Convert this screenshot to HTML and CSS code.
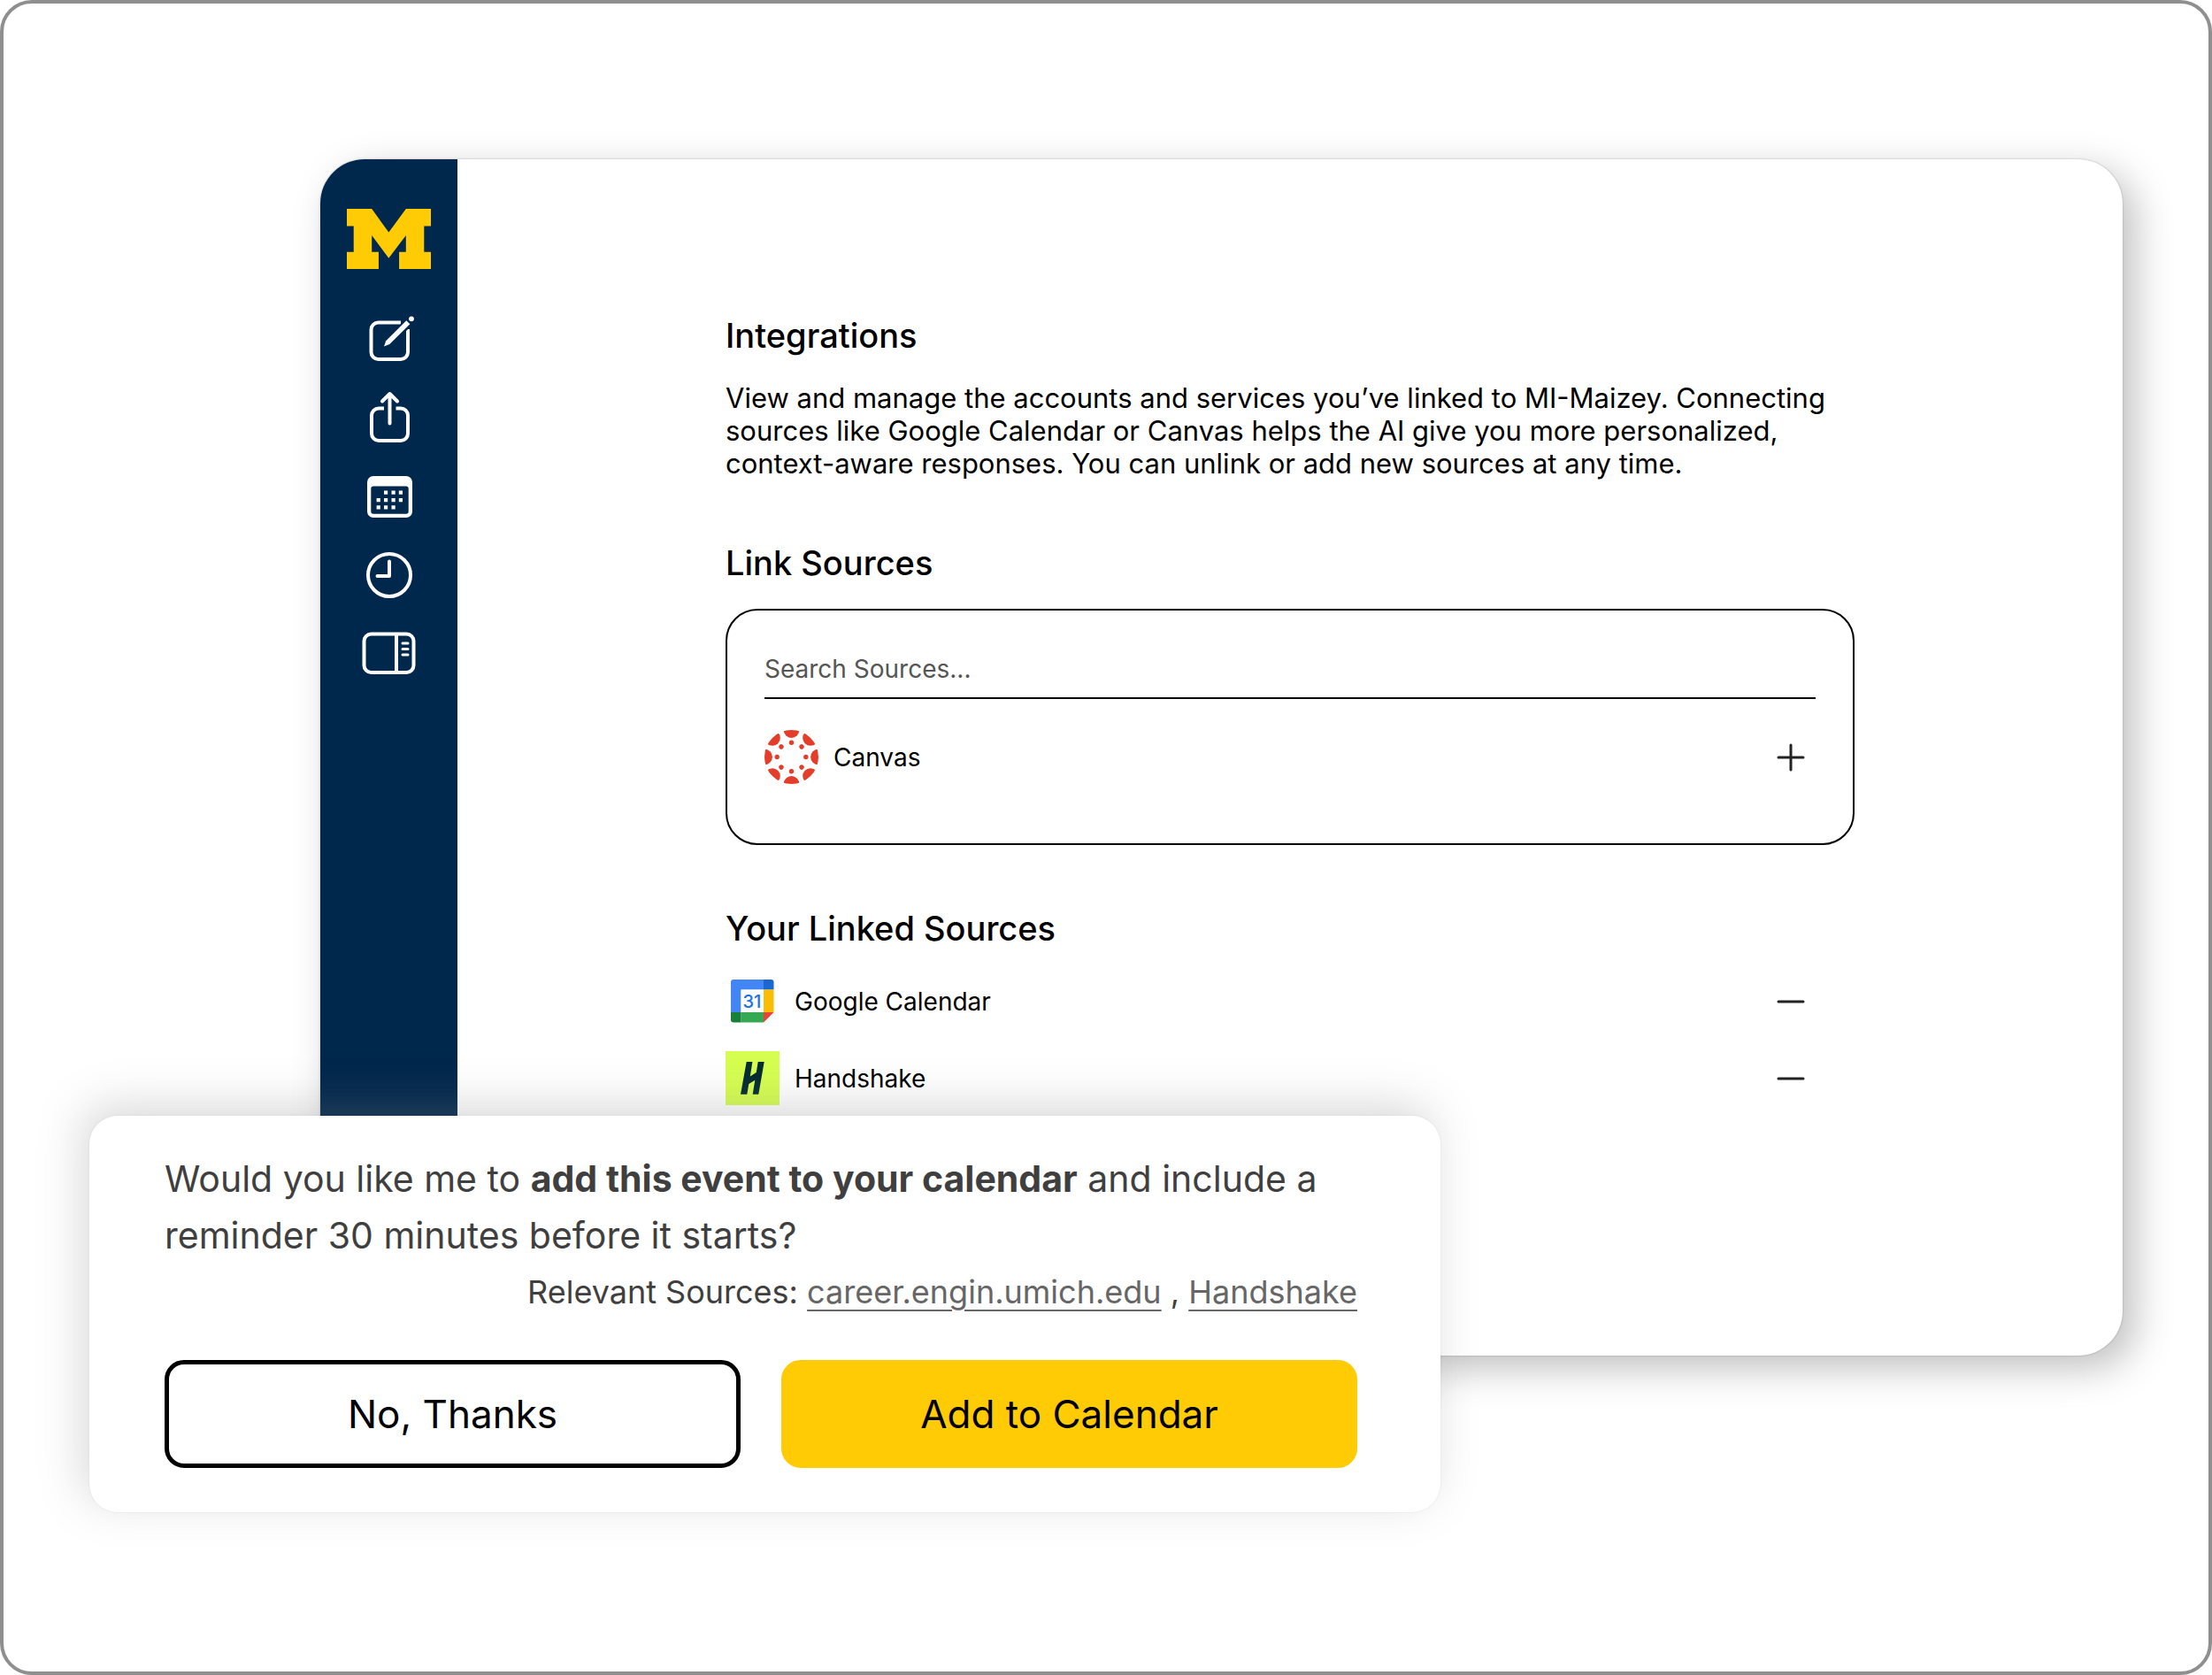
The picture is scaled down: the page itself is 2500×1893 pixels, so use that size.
FILE: index.html
```html
<!DOCTYPE html>
<html lang="en">
<head>
    <meta charset="UTF-8">
    <meta name="viewport" content="width=device-width, initial-scale=1.0">
    <title>Integrations</title>
    <link rel="stylesheet" href="styles.css">
</head>
<body>
    <div class="frame">
        <div class="window">
            <nav class="sidebar" aria-label="Main">
                <svg class="logo" viewBox="0 0 283 202" role="img" aria-label="Michigan">
                    <polygon fill="#ffcb05" points="0,0 84,0 141,79 199,0 283,0 283,58 260,58 260,145 283,145 283,202 176,202 176,145 199,145 199,89 141,166 84,89 84,145 107,145 107,202 0,202 0,145 23,145 23,58 0,58"/>
                </svg>
                <button class="nav-btn" aria-label="New chat">
                    <svg viewBox="0 0 64 64">
                        <path d="M45 13.500H19.500a8 8 0 0 0-8 8V47a8 8 0 0 0 8 8H45a8 8 0 0 0 8-8V21"/>
                        <path class="cutout" d="M32 35L56 11"/>
                        <path class="solid" d="M26 40.600l2.200-6.400L51.300 11.300l4 4-23 22.800z"/>
                        <circle class="solid" cx="57" cy="9.300" r="2.900"/>
                    </svg>
                </button>
                <button class="nav-btn" aria-label="Share">
                    <svg viewBox="0 0 64 64">
                        <path d="M26 21.500h-6a8 8 0 0 0-8 8V50a8 8 0 0 0 8 8h25a8 8 0 0 0 8-8V29.500a8 8 0 0 0-8-8h-5.500"/>
                        <path class="round" d="M32.500 38.500V5M24 13.500l8.500-8.500 8.500 8.500"/>
                    </svg>
                </button>
                <button class="nav-btn" aria-label="Calendar">
                    <svg viewBox="0 0 64 64">
                        <path class="solid" fill-rule="evenodd" d="M14 9h37a7 7 0 0 1 7 7v33a7 7 0 0 1-7 7H14a7 7 0 0 1-7-7V16a7 7 0 0 1 7-7zM14 20.500a2.700 2.700 0 0 0-2.700 2.700V49a2.700 2.700 0 0 0 2.700 2.700h37a2.700 2.700 0 0 0 2.700-2.700V23.200a2.700 2.700 0 0 0-2.700-2.700z"/>
                        <path class="solid" d="M26 25.600h4.200v4.200H26zM34.500 25.600h4.200v4.200h-4.200zM42.800 25.600H47v4.200h-4.200zM17.600 34h4.200v4.200h-4.200zM26 34h4.200v4.200H26zM34.500 34h4.200v4.200h-4.200zM42.800 34H47v4.200h-4.200zM17.600 42.300h4.200v4.200h-4.200zM26 42.300h4.200v4.200H26zM34.500 42.300h4.200v4.200h-4.200z"/>
                    </svg>
                </button>
                <button class="nav-btn" aria-label="History">
                    <svg viewBox="0 0 64 64">
                        <circle cx="32" cy="32" r="24"/>
                        <path class="round" d="M32 16.500V33H18.500"/>
                    </svg>
                </button>
                <button class="nav-btn" aria-label="Toggle panel">
                    <svg viewBox="0 0 64 64">
                        <rect x="3.500" y="9.500" width="56" height="43.500" rx="8"/>
                        <path d="M40 10v43"/>
                        <path class="round thin" d="M47 20h6M47 26.500h6M47 33h6"/>
                    </svg>
                </button>
            </nav>

            <main class="main">
                <div class="content">
                    <section>
                        <h1>Integrations</h1>
                        <p class="intro">View and manage the accounts and services you’ve linked to MI-Maizey. Connecting sources like Google Calendar or Canvas helps the AI give you more personalized, context-aware responses. You can unlink or add new sources at any time.</p>
                    </section>

                    <section>
                        <h2>Link Sources</h2>
                        <div class="source-box">
                            <input class="search" type="text" placeholder="Search Sources..." aria-label="Search Sources">
                            <div class="source">
                                <svg class="source-icon" viewBox="0 0 61 61">
                                    <defs>
                                        <clipPath id="disc"><circle cx="30.500" cy="30.500" r="30.500"/></clipPath>
                                        <g id="spoke">
                                            <circle cx="30.500" cy="0" r="8.900"/>
                                            <circle cx="30.500" cy="14.200" r="2.700"/>
                                        </g>
                                    </defs>
                                    <g fill="#e43e2b" clip-path="url(#disc)">
                                        <use href="#spoke"/>
                                        <use href="#spoke" transform="rotate(45 30.500 30.500)"/>
                                        <use href="#spoke" transform="rotate(90 30.500 30.500)"/>
                                        <use href="#spoke" transform="rotate(135 30.500 30.500)"/>
                                        <use href="#spoke" transform="rotate(180 30.500 30.500)"/>
                                        <use href="#spoke" transform="rotate(225 30.500 30.500)"/>
                                        <use href="#spoke" transform="rotate(270 30.500 30.500)"/>
                                        <use href="#spoke" transform="rotate(315 30.500 30.500)"/>
                                    </g>
                                </svg>
                                <span class="source-name">Canvas</span>
                                <button class="source-btn" aria-label="Link Canvas">
                                    <svg viewBox="0 0 32 32"><path d="M2 16h28M16 2v28"/></svg>
                                </button>
                            </div>
                        </div>
                    </section>

                    <section>
                        <h2>Your Linked Sources</h2>
                        <div class="linked">
                            <div class="source">
                                <svg class="source-icon" viewBox="0 0 61 61">
                                    <g transform="translate(6 6)">
                                        <path fill="#4285f4" d="M3 0h34v11.500H11.500V37H0V3a3 3 0 0 1 3-3z"/>
                                        <path fill="#1967d2" d="M37 0h8.500a3 3 0 0 1 3 3v8.500H37z"/>
                                        <path fill="#fbbc04" d="M37 11.500h11.500V37H37z"/>
                                        <path fill="#34a853" d="M11.500 37H37v11.500H11.500z"/>
                                        <path fill="#188038" d="M0 37h11.500v11.500H3a3 3 0 0 1-3-3z"/>
                                        <path fill="#ea4335" d="M37 37h11.500L37 48.500z"/>
                                        <path fill="#fff" d="M11.500 11.500H37V37H11.500z"/>
                                        <text class="cal-day" x="24" y="31.500">31</text>
                                    </g>
                                </svg>
                                <span class="source-name">Google Calendar</span>
                                <button class="source-btn" aria-label="Unlink Google Calendar">
                                    <svg viewBox="0 0 32 32"><path d="M2 16h28"/></svg>
                                </button>
                            </div>
                            <div class="source">
                                <svg class="source-icon" viewBox="0 0 61 61">
                                    <path fill="#d5fe50" d="M0 0h61v61H0z"/>
                                    <path fill="#042b30" d="M23.700 12h6.700l-2.600 16.500 7-4.500 1.900-12h7l-6.400 36.700h-6.600l2.600-16-7 4.300-2 11.700H17z"/>
                                </svg>
                                <span class="source-name">Handshake</span>
                                <button class="source-btn" aria-label="Unlink Handshake">
                                    <svg viewBox="0 0 32 32"><path d="M2 16h28"/></svg>
                                </button>
                            </div>
                        </div>
                    </section>
                </div>
            </main>
        </div>

        <div class="prompt" role="dialog" aria-label="Add event">
            <p class="question">Would you like me to <strong>add this event to your calendar</strong> and include a reminder 30 minutes before it starts?</p>
            <p class="relevant">Relevant Sources: <a href="#">career.engin.umich.edu</a> , <a href="#">Handshake</a></p>
            <div class="actions">
                <button class="btn btn-outline">No, Thanks</button>
                <button class="btn btn-primary">Add to Calendar</button>
            </div>
        </div>
    </div>
</body>
</html>
```
FILE: styles.css
```css
* {
    box-sizing: border-box;
}

body {
    margin: 0;
    font-family: Inter, "Liberation Sans", sans-serif;
    color: #000;
    background-color: #fff;
}

h1, h2, p {
    margin: 0;
}

button {
    font-family: inherit;
    color: inherit;
    background: none;
    border: none;
    padding: 0;
    cursor: pointer;
}

svg {
    display: block;
}

.frame {
    min-height: 100vh;
    border: 4px solid #8f8f8f;
    border-radius: 36px;
    padding: 176px 97px 97px;
}

/* app window */
.window {
    display: flex;
    margin-left: 261px;
    border-radius: 50px;
    background-color: #fff;
    box-shadow: 14px 14px 44px rgba(0, 0, 0, 0.25), 0 0 2px rgba(0, 0, 0, 0.3);
}

.sidebar {
    width: 155px;
    flex-shrink: 0;
    display: flex;
    flex-direction: column;
    align-items: center;
    gap: 25px;
    padding-top: 56px;
    background-color: #00274c;
    border-radius: 50px 0 0 50px;
}

.logo {
    width: 95px;
    height: 68px;
    margin-bottom: 22px;
}

.nav-btn {
    width: 64px;
    height: 64px;
}

.nav-btn svg {
    fill: none;
    stroke: #fff;
    stroke-width: 4;
}

.nav-btn .solid {
    fill: #fff;
    stroke: none;
}

.nav-btn .cutout {
    stroke: #00274c;
    stroke-width: 10;
}

.nav-btn .round {
    stroke-linecap: round;
    stroke-linejoin: round;
}

.nav-btn .thin {
    stroke-width: 3;
}

.main {
    flex: 1;
    padding: 175px 48px 283px;
}

.content {
    max-width: 1276px;
    margin: 0 auto;
    display: flex;
    flex-direction: column;
    gap: 70px;
}

h1, h2 {
    font-size: 38px;
    line-height: 48px;
    font-weight: 500;
    margin-bottom: 28px;
}

.intro {
    font-size: 31px;
    line-height: 37px;
}

.source-box {
    border: 2px solid #000;
    border-radius: 36px;
    padding: 49px 42px 67px;
}

.search {
    display: block;
    width: 100%;
    height: 51px;
    margin-bottom: 35px;
    padding: 0 0 15px;
    border: none;
    border-bottom: 2px solid #000;
    background: none;
    font-family: inherit;
    font-size: 28px;
    outline: none;
}

.search::placeholder {
    color: #555;
    opacity: 1;
}

.linked {
    display: flex;
    flex-direction: column;
    gap: 26px;
    padding-right: 44px;
}

.source {
    display: flex;
    align-items: center;
    gap: 17px;
}

.source-icon {
    width: 61px;
    height: 61px;
}

.cal-day {
    font-size: 20px;
    font-weight: 500;
    text-anchor: middle;
    fill: #1a73e8;
}

.source-name {
    flex: 1;
    font-size: 28px;
}

.source-btn {
    width: 56px;
    height: 56px;
    display: flex;
    align-items: center;
    justify-content: center;
}

.source-btn svg {
    width: 32px;
    height: 32px;
    stroke: #222;
    stroke-width: 3;
    stroke-linecap: round;
}

/* prompt that lies over the lower left corner of the window */
.prompt {
    position: relative;
    width: 100%;
    max-width: 1527px;
    margin-top: -271px;
    padding: 39px 94px 50px 85px;
    border-radius: 32px;
    background-color: #fff;
    color: #3f3f3f;
    box-shadow: -8px -12px 50px rgba(128, 128, 128, 0.3), 0 0 2px rgba(0, 0, 0, 0.1);
}

.question {
    font-size: 41px;
    line-height: 64px;
}

.relevant {
    font-size: 36px;
    line-height: 64px;
    text-align: right;
}

.relevant a {
    color: #666;
    text-decoration: underline;
    text-decoration-thickness: 2px;
    text-underline-offset: 7px;
}

.actions {
    display: flex;
    gap: 46px;
    margin-top: 45px;
}

.btn {
    flex: 1;
    height: 122px;
    border: 5px solid #000;
    border-radius: 22px;
    font-size: 44px;
    color: #000;
}

.btn-primary {
    border-color: #ffcb05;
    background-color: #ffcb05;
}
```
